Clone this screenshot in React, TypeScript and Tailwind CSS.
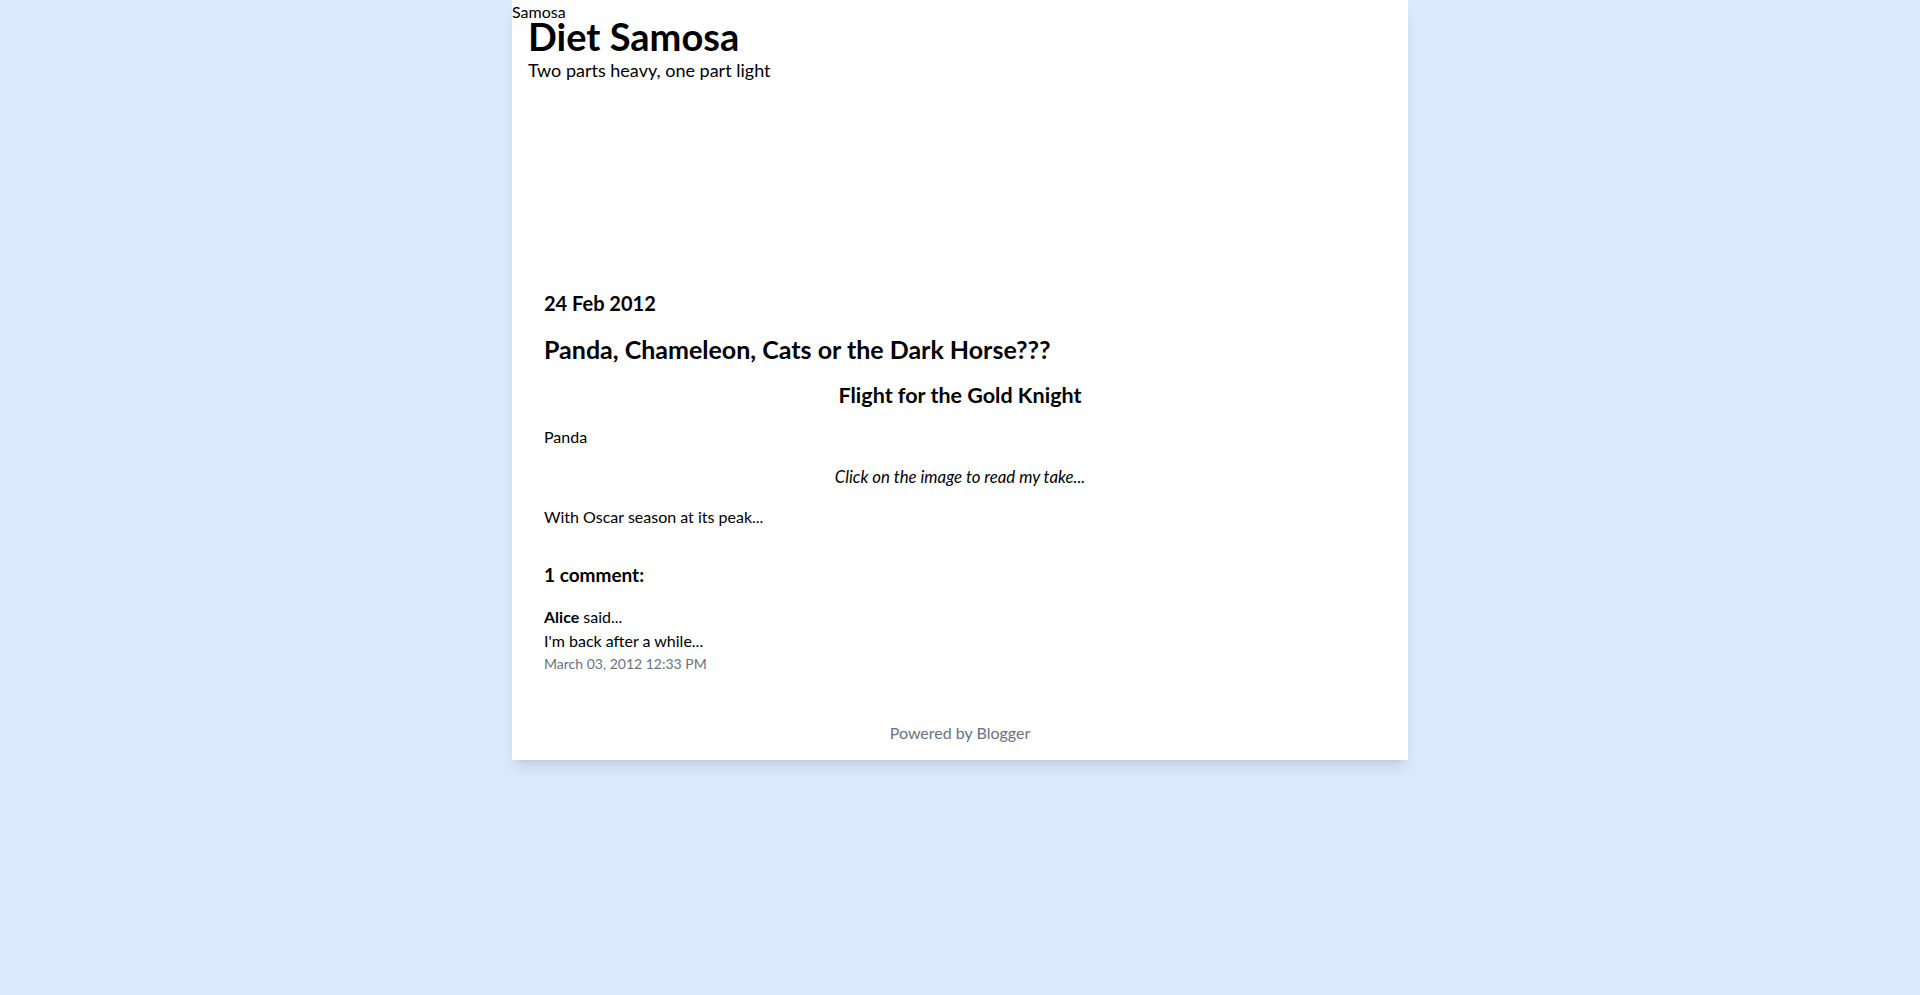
import React from "react";

type Comment = {
  author: string;
  body: string;
  date: string;
};

const comments: Comment[] = [
  { author: "Alice", body: "I'm back after a while...", date: "March 03, 2012 12:33 PM" },
];

function App() {
  return (
    <div className="min-h-screen bg-blue-100 font-['Lato',sans-serif] text-black">
      <div className="max-w-4xl mx-auto bg-white shadow-lg">
        {/* header image is missing, so only its alt text shows */}
        <header className="relative h-64">
          <span className="block text-base leading-6">Samosa</span>
          <div className="absolute inset-0 p-4">
            <h1 className="text-[38px] font-bold leading-10">Diet Samosa</h1>
            <p className="text-lg leading-7">Two parts heavy, one part light</p>
          </div>
        </header>

        <main className="px-8 pt-[33px] pb-[31px]">
          <h2 className="text-xl font-bold leading-7 mb-4">24 Feb 2012</h2>
          <h3 className="text-[25px] font-bold leading-8 mb-4">
            Panda, Chameleon, Cats or the Dark Horse???
          </h3>
          <h4 className="text-[21.5px] font-bold leading-7 mb-4 text-center">
            Flight for the Gold Knight
          </h4>
          <p className="text-base leading-6 mb-4">Panda</p>
          <p className="text-[16.8px] leading-6 mb-4 text-center italic">
            Click on the image to read my take...
          </p>
          <p className="text-base leading-6">With Oscar season at its peak...</p>

          <section className="mt-8">
            <h4 className="text-[19px] font-bold leading-7 mb-4">
              {comments.length} comment:
            </h4>
            {comments.map((c) => (
              <div key={c.author}>
                <p className="text-base leading-6">
                  <span className="font-bold">{c.author}</span> said...
                </p>
                <p className="text-base leading-6">{c.body}</p>
                <p className="mt-px text-sm leading-5 text-gray-500">{c.date}</p>
              </div>
            ))}
          </section>
        </main>

        <footer className="pt-4 pb-[15px] text-center text-base leading-6 text-gray-500">
          Powered by Blogger
        </footer>
      </div>
    </div>
  );
}

export default App;
